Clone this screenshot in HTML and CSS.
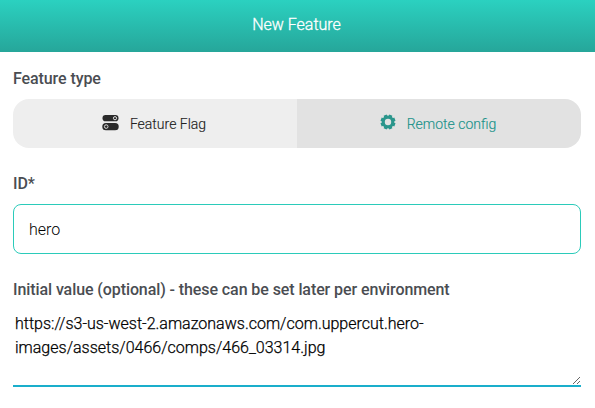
FILE: index.html
```html
<!DOCTYPE html>
<html lang="en"><head><meta charset="utf-8"><title>New Feature</title><link rel="stylesheet" href="styles.css"></head>
<body>
<header class="header">New Feature</header>
<main class="form">
<div class="label">Feature type</div>
<div class="tabs">
<div class="tab"><svg class="icon toggles" viewBox="0 0 17 17"><rect x=".5" y="1" width="16" height="6.3" rx="3.1" fill="#2b2b2b"/><rect x=".3" y="9" width="16.4" height="7.3" rx="3.6" fill="#2b2b2b"/><circle cx="13" cy="4.2" r="1.6" fill="none" stroke="#ddd" stroke-width="1"/><circle cx="4.2" cy="12.6" r="1.8" fill="none" stroke="#ddd" stroke-width="1"/></svg><span>Feature Flag</span></div>
<div class="tab active"><svg class="icon gear" viewBox="-8 -8 16 16"><circle r="4.8" fill="none" stroke="#2b968c" stroke-width="3.2"/><g class="teeth" stroke="#2b968c" stroke-width="3.3"><path d="M0-5V-7.5M0 5V7.5M-5 0H-7.5M5 0H7.5M3.6-3.6L5.3-5.3M-3.6 3.6L-5.3 5.3M3.6 3.6L5.3 5.3M-3.6-3.6L-5.3-5.3" transform="rotate(22.5)"/></g></svg><span>Remote config</span></div>
</div>
<label class="label id-label" for="id">ID*</label>
<input class="input" id="id" value="hero">
<label class="label value-label" for="value">Initial value (optional) - these can be set later per environment</label>
<textarea class="area" id="value">https://s3-us-west-2.amazonaws.com/com.uppercut.hero-images/assets/0466/comps/466_03314.jpg</textarea>
</main>
</body></html>
```
FILE: styles.css
```css
* { box-sizing: border-box; }
body { margin: 0; background: #fff; font-family: Roboto, sans-serif; font-size: 16px; }
.header { height: 52px; padding-right: 2px; line-height: 50px; text-align: center; color: #fff; background: linear-gradient(#2bd1c0, #26a69a); font-weight: 300; -webkit-text-stroke: .3px #fff; }
.form { display: flex; flex-direction: column; padding: 16px 14px 0 13px; }
.label { height: 21px; line-height: 21px; font-weight: 500; letter-spacing: -.09px; color: #4a4d52; }
.tabs { display: flex; height: 49px; margin-top: 10px; border-radius: 16px; overflow: hidden; }
.tab { flex: 1; display: flex; align-items: center; justify-content: center; gap: 11px; padding-right: 2px; background: #eee; font-size: 14px; font-weight: 300; color: #222; -webkit-text-stroke: .15px; }
.active { background: #e2e2e2; color: #20938a; }
.icon { width: 17px; height: 17px; margin-top: -3px; }
.gear { width: 16px; height: 16px; }
.id-label { margin-top: 25px; }
.input { height: 50px; margin-top: 10px; padding: 0 15px; border: 1px solid #2bcbba; border-radius: 8px; font: 300 16px Roboto, sans-serif; outline: 0; }
.value-label { margin-top: 25px; }
.area { height: 86px; margin-top: 1px; padding: 11px 2px; border: 0; border-bottom: 2px solid #1aaecb; font: 300 16px/24px Roboto, sans-serif; color: #000; -webkit-text-stroke: .25px #000; resize: both; outline: 0; }
```
